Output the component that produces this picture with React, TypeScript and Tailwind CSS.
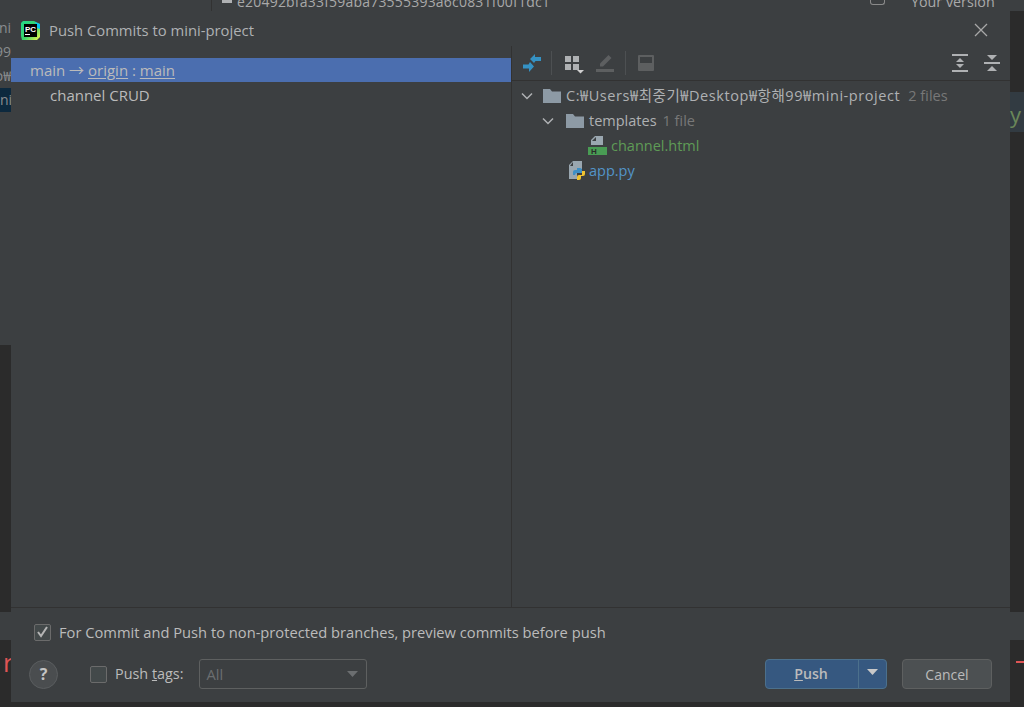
import React from "react";

const font = { fontFamily: '"Open Sans", "Noto Sans CJK KR", sans-serif' };

function PcLogo() {
  return (
    <svg width="21" height="21" viewBox="0 0 21 21">
      <defs>
        <linearGradient id="pcg" x1="0" y1="0" x2="1" y2="1">
          <stop offset="0" stopColor="#21d789" />
          <stop offset="0.55" stopColor="#3bd36b" />
          <stop offset="1" stopColor="#fcf84a" />
        </linearGradient>
      </defs>
      <path d="M3 1h11l6 3v13l-3 3H2l-1-4V3z" fill="url(#pcg)" />
      <path d="M15 2l5 2v5l-3-1z" fill="#07c3f2" />
      <rect x="4" y="4" width="13" height="13" fill="#000" />
      <text x="5" y="11.5" fontSize="8" fontWeight="700" fill="#fff" fontFamily="Liberation Sans, sans-serif">PC</text>
      <rect x="5" y="14" width="5" height="1" fill="#fff" />
    </svg>
  );
}

function Chevron() {
  return (
    <svg width="12" height="8" viewBox="0 0 12 8" fill="none" stroke="#afb1b3" strokeWidth="1.5">
      <path d="M1 1.5l5 5 5-5" />
    </svg>
  );
}

function Folder() {
  return (
    <svg width="18" height="15" viewBox="0 0 18 15">
      <path d="M0 1h7l2 2.500h9V15H0z" fill="#8d9aa5" />
    </svg>
  );
}

function ArrowsIcon() {
  return (
    <svg width="20" height="20" viewBox="0 0 20 20" fill="#3592c4">
      <path d="M8 6l5-5v3h6v4h-5.500L12 10z" />
      <path d="M12 13.500L7 19v-3.500H1v-4h5.500L8 9z" />
    </svg>
  );
}

function GridIcon() {
  return (
    <svg width="20" height="20" viewBox="0 0 20 20" fill="#afb1b3">
      <rect x="0" y="2" width="6" height="6" />
      <rect x="8" y="2" width="6" height="6" />
      <rect x="0" y="10" width="6" height="6" />
      <rect x="8" y="10" width="6" height="6" />
      <path d="M12 16h7l-3.500 3.500z" fill="#d0d0d0" />
    </svg>
  );
}

function PencilIcon() {
  return (
    <svg width="19" height="19" viewBox="0 0 19 19" fill="#5d5f60">
      <path d="M12.500 1l3 3-8.500 8.500H4V9.500z" />
      <rect x="0" y="15" width="18" height="3" />
    </svg>
  );
}

function SquareIcon() {
  return (
    <svg width="16" height="16" viewBox="0 0 16 16">
      <rect x="0" y="0" width="16" height="16" rx="1" fill="#5d5f60" />
      <rect x="2" y="2" width="12" height="6" fill="#3c3f41" />
    </svg>
  );
}

function ExpandIcon() {
  return (
    <svg width="16" height="18" viewBox="0 0 16 18" fill="#afb1b3">
      <rect x="0" y="0" width="16" height="2" />
      <rect x="0" y="16" width="16" height="2" />
      <path d="M8 4l4 4H4z" />
      <path d="M8 14l4-4H4z" />
    </svg>
  );
}

function CollapseIcon() {
  return (
    <svg width="16" height="18" viewBox="0 0 16 18" fill="#afb1b3">
      <rect x="0" y="8" width="16" height="2" />
      <path d="M3 1h10L8 6z" />
      <path d="M3 17h10l-5-5z" />
    </svg>
  );
}

function HtmlFile() {
  return (
    <svg width="20" height="19" viewBox="0 0 20 19">
      <path d="M7 0h8v9H3V4z" fill="#9aa7b0" />
      <path d="M8 1v4H4z" fill="#3c3f41" />
      <rect x="0" y="11" width="19" height="8" fill="#499c54" />
      <text x="3" y="18" fontSize="8" fontWeight="700" fill="#2b2b2b" fontFamily="Liberation Sans, sans-serif">H</text>
    </svg>
  );
}

function PyFile() {
  return (
    <svg width="18" height="20" viewBox="0 0 18 20">
      <path d="M5 0h9v8l-5 2v8H1V4z" fill="#9aa7b0" />
      <path d="M5 1v4H2z" fill="#3c3f41" />
      <path d="M9 7h3a2 2 0 012 2v3H9a2 2 0 00-2 2H5v-3a2 2 0 012-2h2z" fill="#3d8fc6" />
      <path d="M14 10h3v3a2 2 0 01-2 2h-2v2a2 2 0 01-2 2H9v-3a2 2 0 012-2h3z" fill="#f0c330" />
    </svg>
  );
}

function Sep() {
  return <div className="w-px h-6 bg-[#4d5052]" />;
}

function Tree() {
  return (
    <div className="flex flex-col text-[14.5px] text-[#afb1b3] pt-[2px]">
      <div className="h-[25px] flex items-center pl-[9px]">
        <Chevron />
        <span className="ml-[10px]"><Folder /></span>
        <span className="ml-[5px] whitespace-nowrap tracking-[0.57px]">C:₩Users₩최중기₩Desktop₩항해99₩mini-project</span>
        <span className="ml-2 text-[#787878]">2 files</span>
      </div>
      <div className="h-[25px] flex items-center pl-[30px]">
        <Chevron />
        <span className="ml-[12px]"><Folder /></span>
        <span className="ml-[5px]">templates</span>
        <span className="ml-[6px] text-[#787878]">1 file</span>
      </div>
      <div className="h-[25px] flex items-center pl-[76px]">
        <HtmlFile />
        <span className="ml-[3px] text-[#5f9b56]">channel.html</span>
      </div>
      <div className="h-[25px] flex items-center pl-[56px]">
        <PyFile />
        <span className="ml-[3px] text-[#5394c8]">app.py</span>
      </div>
    </div>
  );
}

export default function App() {
  return (
    <div className="w-[1024px] h-[707px] flex flex-col overflow-hidden bg-[#2b2b2b] text-[#bbbbbb]" style={font}>
      <div className="h-[11px] shrink-0 bg-[#3c3f41] flex items-end overflow-hidden text-[14px] text-[#a9a9a9]">
        <div className="w-[212px] h-full border-r border-[#323232] shrink-0" />
        <div className="ml-[10px] w-[10px] h-[3px] self-start bg-[#afb1b3]" />
        <div className="ml-[5px] whitespace-nowrap leading-[11px] pb-[4px] w-[633px] tracking-[0.2px]">e20492bfa33f59aba73555393a6c0831f00f1dc1</div>
        <div className="w-[15px] h-[5px] self-start border border-t-0 border-[#8a8a8a] rounded-b-[3px]" />
        <div className="ml-[26px] whitespace-nowrap leading-[11px] pb-[4px] text-[14.3px]">Your version</div>
      </div>
      <div className="flex-1 flex min-h-0">
        <div className="w-[11px] shrink-0 flex flex-col text-[14px] text-[#8a8d8f] overflow-hidden">
          <div className="h-[334px] bg-[#3c3f41] flex flex-col items-end pt-[4px] overflow-hidden">
            <div className="h-[25px] leading-[25px]">ni</div>
            <div className="h-[24px] leading-[24px]">99</div>
            <div className="h-[24px] leading-[24px]">o₩</div>
            <div className="w-full h-[24px] leading-[24px] bg-[#0d293e] text-right">ni</div>
          </div>
          <div className="flex-1 bg-[#2b2b2b]" />
          <div className="h-[28px] bg-[#3c3f41]" />
          <div className="h-[44px] bg-[#2b2b2b] flex items-center text-[#e05555] text-[26px] pl-[3px]">r</div>
          <div className="h-[18px] bg-[#2b2b2b]" />
        </div>
        <div className="flex-1 min-w-0 bg-[#3c3f41] flex flex-col">
          <div className="h-[35px] shrink-0 flex items-center pt-[3px] pl-[9px] pr-[22px] text-[14.8px] text-[#afb1b3]">
            <PcLogo />
            <span className="ml-[8px]">Push Commits to mini-project</span>
            <svg className="ml-auto" width="14" height="14" viewBox="0 0 14 14" stroke="#a8a8a8" strokeWidth="1.3">
              <path d="M1 1l12 12M13 1L1 13" />
            </svg>
          </div>
          <div className="flex-1 flex min-h-0 border-b border-[#323232]">
            <div className="w-[501px] shrink-0 pt-3 border-r border-[#323232] text-[15px]">
              <div className="h-[24px] bg-[#4b6eaf] flex items-center pl-[19px] whitespace-pre">
                <span>main → </span><span className="underline underline-offset-2">origin</span><span> : </span><span className="underline underline-offset-2">main</span>
              </div>
              <div className="h-[24px] mt-px flex items-center pl-[39px]">channel CRUD</div>
            </div>
            <div className="flex-1 min-w-0 flex flex-col">
              <div className="h-[35px] shrink-0 border-b border-[#323232] flex items-center pl-[10px] pr-[10px]">
                <ArrowsIcon />
                <span className="ml-[9px]"><Sep /></span>
                <span className="ml-[13px] mt-[2px]"><GridIcon /></span>
                <span className="ml-[11px]"><PencilIcon /></span>
                <span className="ml-[10px]"><Sep /></span>
                <span className="ml-[12px]"><SquareIcon /></span>
                <span className="ml-auto"><ExpandIcon /></span>
                <span className="ml-[16px]"><CollapseIcon /></span>
              </div>
              <Tree />
            </div>
          </div>
          <div className="h-[94px] shrink-0 flex flex-col pt-[15px] text-[14.7px]">
            <div className="flex items-center h-[18px] pl-[23px]">
              <div className="w-[17px] h-[17px] rounded-[2px] border border-[#6b6b6b] bg-[#43494a] flex items-center justify-center">
                <svg width="13" height="12" viewBox="0 0 13 12" fill="none" stroke="#b5b5b5" strokeWidth="2">
                  <path d="M2 6l3 4 6-9" />
                </svg>
              </div>
              <span className="ml-2">For Commit and Push to non-protected branches, preview commits before push</span>
            </div>
            <div className="flex items-center h-[30px] mt-[18px] pl-[18px]">
              <div className="w-[29px] h-[29px] rounded-full bg-[#4a4d4f] border border-[#5a5d5f] flex items-center justify-center text-[#c4c4c4] font-bold text-[16px]">?</div>
              <div className="ml-[32px] w-[17px] h-[17px] rounded-[2px] border border-[#6b6b6b] bg-[#43494a]" />
              <span className="ml-2 text-[14.4px]">Push <span className="underline">t</span>ags:</span>
              <div className="ml-[15px] w-[168px] h-[30px] rounded-[3px] border border-[#5e6060] flex items-center pl-[7px] pr-[8px] text-[#6b6e70]">
                All
                <svg className="ml-auto" width="11" height="6" viewBox="0 0 11 6"><path d="M0 0h11L5.500 6z" fill="#6b6e70" /></svg>
              </div>
              <div className="ml-auto w-[122px] h-[30px] rounded-[4px] bg-[#365880] border border-[#4c708c] flex items-center font-semibold text-[#bbbbbb] text-[14.2px]">
                <div className="flex-1 text-center pr-[2px]"><span className="underline">P</span>ush</div>
                <div className="w-[28px] h-full border-l border-[#4c708c] flex items-center justify-center pb-[4px]">
                  <svg width="11" height="6" viewBox="0 0 11 6"><path d="M0 0h11L5.500 6z" fill="#c8c8c8" /></svg>
                </div>
              </div>
              <div className="ml-[15px] mr-[18px] w-[90px] h-[30px] rounded-[4px] bg-[#4c5052] border border-[#5e6060] flex items-center justify-center text-[14px]">Cancel</div>
            </div>
          </div>
        </div>
        <div className="w-[14px] shrink-0 flex flex-col overflow-hidden">
          <div className="h-[81px] bg-[#2b2b2b]" />
          <div className="h-[40px] bg-[#323b42] text-[#6a8759] text-[22px] leading-[44px]">y</div>
          <div className="flex-1 bg-[#2b2b2b]" />
          <div className="h-[28px] bg-[#3c3f41]" />
          <div className="h-[21px] bg-[#2b2b2b]" />
          <div className="h-[2px] bg-[#e05555] ml-[6px]" />
          <div className="h-[39px] bg-[#2b2b2b]" />
        </div>
      </div>
      <div className="h-[5px] shrink-0 bg-[#2b2b2b]" />
    </div>
  );
}
